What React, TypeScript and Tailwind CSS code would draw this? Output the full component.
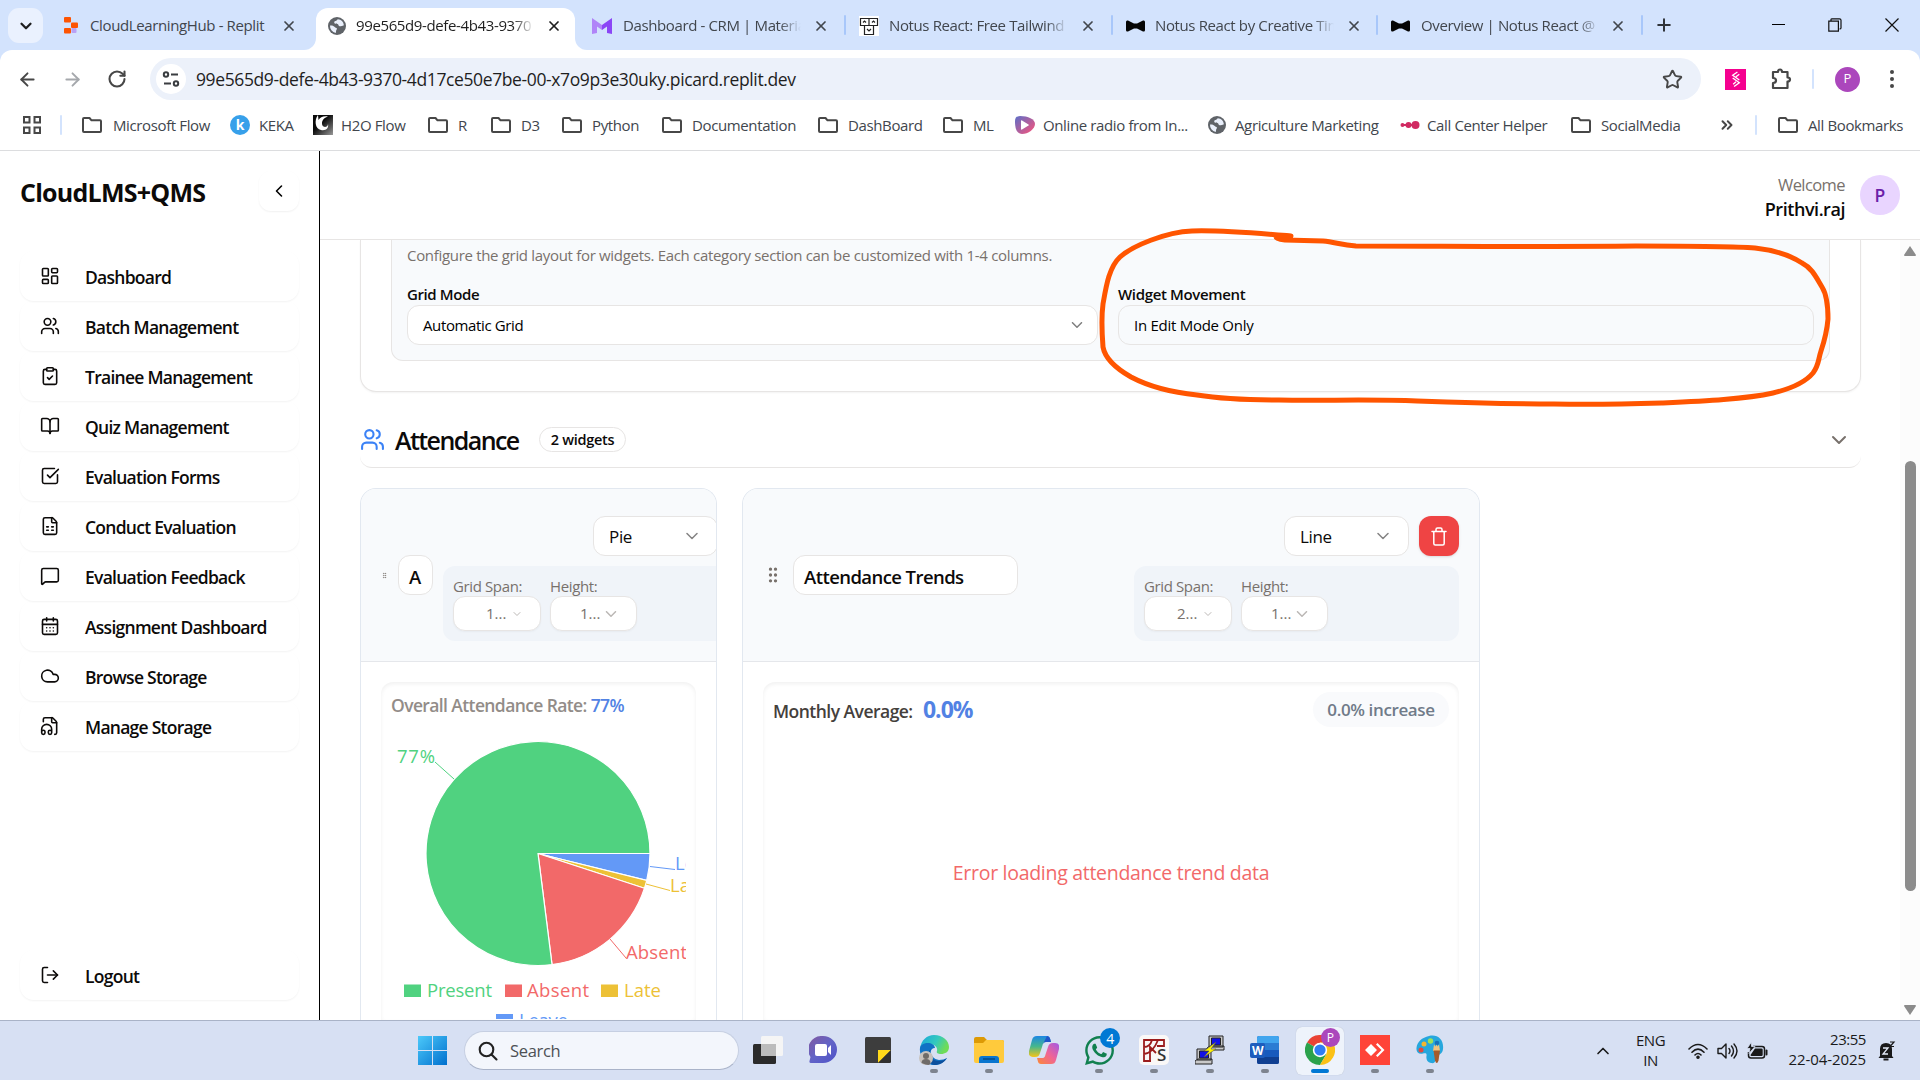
import React from 'react';
import {
  LayoutDashboard, Users, ClipboardCheck, BookOpen, FileSpreadsheet, MessageSquare,
  CalendarDays, Cloud, FileHeadphone, LogOut, ChevronLeft, ChevronDown, ChevronUp, GripVertical,
  X, Plus, ArrowLeft, ArrowRight, RotateCw, Star, SquareCheckBig, ChevronsRight,
} from 'lucide-react';
import { FaWhatsapp } from 'react-icons/fa';

const Globe = ({ className = '' }) => (
  <svg viewBox="0 0 18 18" className={`size-[18px] shrink-0 ${className}`}>
    <circle cx="9" cy="9" r="9" fill="#5f6368" />
    <path d="M9.8 2.2C9 3 8.700 3.800 7.500 4c-1.400.2-1.500 1.500-1 2.300.6.8 2.200.4 3.100.8 1.200.5.6 1.900 1.900 2.100 1.500.2 2.400-.4 4.400-1A7 7 0 0 0 9.800 2.200zM2 8.500c1.900-.4 4 .4 4.700 1.500.6 1 1.800.7 2.200 1.600.3.8-.5 1.300-.8 2.200-.2.700.1 1.500-.4 2.100A7 7 0 0 1 2 8.500z" fill="#e9effb" />
  </svg>
);

const Bow = () => (
  <svg viewBox="0 0 19 12" className="h-3 w-[19px] shrink-0">
    <path d="M0 2Q0 0 2 .6L8 3.500h3L17 .6Q19 0 19 2v8q0 2-2 1.400L11 8.500H8L2 11.400Q0 12 0 10z" fill="#050505" />
  </svg>
);

const Replit = () => (
  <svg viewBox="0 0 14 17" className="h-[17px] w-3.5 shrink-0">
    <rect width="7" height="5.500" rx="1" fill="#fd5402" />
    <rect x="7" y="5.500" width="7" height="5.500" rx="1" fill="#fd5402" />
    <rect y="11" width="7" height="5.500" rx="1" fill="#fd5402" />
    <rect x="7.500" y="11" width="5" height="5" rx="1" fill="#b9a2f5" />
  </svg>
);

const MaterialM = () => (
  <svg viewBox="0 0 20 16" className="h-4 w-5 shrink-0">
    <path d="M0 0l10 7v5L5 8.500V15l-5 1z" fill="#b084f8" />
    <path d="M20 0L10 7v5l5-3.500V15l5 1z" fill="#8b46f6" />
  </svg>
);

const NotusFaces = () => (
  <svg viewBox="0 0 20 20" className="size-5 shrink-0">
    <rect width="20" height="20" fill="#fff" />
    <g fill="none" stroke="#222" strokeWidth="1.200">
      <path d="M1.500 2.500h17v7h-17zM10 2.500v7M5.500 9.500h9v9h-9z" />
      <path d="M4 6.500l1.500-1.500L7 6.500M13 6.500l1.500-1.500 1.500 1.500M8 13l2 2 2-2" />
    </g>
  </svg>
);

type TabProps = { icon: React.ReactNode; label: string; className: string; labelClass: string; fade?: boolean; active?: boolean };
function Tab({ icon, label, className, labelClass, fade = true, active }: TabProps) {
  return (
    <div className={`flex h-[42px] shrink-0 items-center pb-[7px] ${active ? 'rounded-t-[12px] bg-white' : ''} ${className}`}>
      {icon}
      <span className={`whitespace-nowrap text-[15px] tracking-[-0.025em] ${active ? 'text-[#1f1f1f]' : 'text-[#41464d]'} ${fade ? '[mask-image:linear-gradient(to_right,black_88%,transparent_100%)]' : ''} ${labelClass}`}>{label}</span>
      <X className="-ml-[3px] size-4 shrink-0" strokeWidth={2.600} color={active ? '#1f1f1f' : '#41464d'} />
    </div>
  );
}

const TabSep = ({ className = '' }) => <div className={`h-5 w-[2px] shrink-0 rounded bg-[#a8c7fa] ${className}`} />;

function TabStrip() {
  return (
    <div className="flex h-[50px] items-start bg-[#d3e3fd] pt-2">
      <div className="ml-2 flex size-[35px] items-center justify-center rounded-[11px] bg-[#eaf1fe]">
        <ChevronDown className="size-[18px]" strokeWidth={3} color="#1f1f1f" />
      </div>
      <Tab icon={<Replit />} label="CloudLearningHub - Replit" fade={false} className="w-[261px] pl-[21px]" labelClass="ml-3 mr-[15px] w-[179px]" />
      <div className="flex h-[42px] w-3 shrink-0 items-end overflow-hidden bg-white"><div className="h-[42px] w-3 rounded-br-[12px] bg-[#d3e3fd]" /></div>
      <Tab active icon={<Globe />} label="99e565d9-defe-4b43-9370" className="w-[259px] pl-3" labelClass="ml-[10px] mr-[15px] w-[178px]" />
      <div className="h-[42px] w-3 shrink-0 bg-white"><div className="h-[42px] w-3 rounded-bl-[12px] bg-[#d3e3fd]" /></div>
      <Tab icon={<MaterialM />} label="Dashboard - CRM | Materia" className="w-[257px] pl-[5px]" labelClass="ml-[11px] mr-[15px] w-[178px]" />
      <TabSep className="mt-[7px]" />
      <Tab icon={<NotusFaces />} label="Notus React: Free Tailwind" className="w-[265px] pl-[13px]" labelClass="ml-[10px] mr-[15px] w-[179px]" />
      <TabSep className="mt-[7px]" />
      <Tab icon={<Bow />} label="Notus React by Creative Tim" className="w-[263px] pl-[13px]" labelClass="ml-[10px] mr-[15px] w-[179px]" />
      <TabSep className="mt-[7px]" />
      <Tab icon={<Bow />} label="Overview | Notus React @" className="w-[263px] pl-[13px]" labelClass="ml-[11px] mr-[13px] w-[179px]" />
      <TabSep className="mt-[7px]" />
      <Plus className="ml-[11px] mt-[7px] size-5 shrink-0" strokeWidth={2.400} color="#30343a" />
      <div className="ml-auto mr-[21px] flex h-[33px] items-center gap-[43px]">
        <div className="h-px w-[13px] bg-black" />
        <svg viewBox="0 0 14 14" className="size-[14px]"><path d="M.8 3.200h9.600v10H.8zM3 3V1.500Q3 .8 4 .8h7.500Q13 .8 13 2.300V10q0 1-1.500 1" fill="none" stroke="#111" strokeWidth="1.200" /></svg>
        <svg viewBox="0 0 14 14" className="size-[14px]"><path d="M.5.500l13 13M13.500.500l-13 13" stroke="#111" strokeWidth="1.200" /></svg>
      </div>
    </div>
  );
}

function AddressBar() {
  return (
    <div className="bg-[#d3e3fd]">
      <div className="flex h-[58px] items-center rounded-t-[12px] bg-white">
        <ArrowLeft className="ml-[17px] size-[21px]" strokeWidth={2.200} color="#474747" />
        <ArrowRight className="ml-6 size-[21px]" strokeWidth={2.200} color="#a5a8ac" />
        <RotateCw className="ml-6 size-[20px]" strokeWidth={2.500} color="#474747" />
        <div className="ml-[23px] flex h-[42px] w-[1551px] shrink-0 items-center rounded-full bg-[#ecf1fa]">
          <div className="ml-[6px] flex size-[30px] items-center justify-center rounded-full bg-white">
            <svg viewBox="0 0 18 18" className="size-[18px]" fill="none" stroke="#3a3d41" strokeWidth="2"><circle cx="4" cy="4.500" r="2.200" /><path d="M9 4.500h7M2 13.500h7" /><circle cx="14" cy="13.500" r="2.200" /></svg>
          </div>
          <span className="ml-[10px] whitespace-nowrap text-[17.500px] tracking-[-0.022em] text-[#1f1f1f]">99e565d9-defe-4b43-9370-4d17ce50e7be-00-x7o9p3e30uky.picard.replit.dev</span>
          <Star className="ml-auto mr-[18px] size-[21px]" strokeWidth={2.200} color="#474747" />
        </div>
        <div className="ml-[24px] flex h-[21px] w-[21px] items-center justify-center bg-[#f5008f]">
          <svg viewBox="0 0 12 18" className="h-[17px] w-3" fill="none" stroke="#fff" strokeWidth="1.400"><path d="M7.500 1L2.500 4.500l7 5M9.500 3.500L6 6M2.500 7.500l7 5-5.500 4M6 11.500L3 14" /></svg>
        </div>
        <svg viewBox="0 0 22 22" className="ml-6 size-[22px]" fill="none" stroke="#474747" strokeWidth="2.200" strokeLinejoin="round"><path d="M3 4h5q0-2.500 2-2.500T12 4h5.500v5.500q2.500 0 2.500 2t-2.500 2V20H3v-5q3 0 3-2.500T3 10z" /></svg>
        <div className="ml-[20px] h-5 w-[2px] rounded bg-[#d3e3fd]" />
        <div className="ml-[21px] flex size-[25px] items-center justify-center rounded-full bg-[#ab47bc] text-[13px] text-white">P</div>
        <svg viewBox="0 0 4 20" className="ml-[30px] h-5 w-1" fill="#474747"><circle cx="2" cy="3" r="2" /><circle cx="2" cy="10" r="2" /><circle cx="2" cy="17" r="2" /></svg>
      </div>
    </div>
  );
}

const FolderIcon = () => (
  <svg viewBox="0 0 20 16" className="h-4 w-5" fill="none" stroke="#474747" strokeWidth="2" strokeLinejoin="round"><path d="M1 2q0-1 1-1h5.500l2 2.300H18q1 0 1 1V14q0 1-1 1H2q-1 0-1-1z" /></svg>
);
const KekaIcon = () => <div className="flex size-5 items-center justify-center rounded-full bg-[#37a0ea] text-[14px] font-bold leading-none text-white">k</div>;
const H2OIcon = () => (
  <svg viewBox="0 0 20 20" className="size-5">
    <defs><linearGradient id="h2o" x1="0" y1="0" x2="1" y2="1"><stop offset=".4" stopColor="#0a0a0a" /><stop offset="1" stopColor="#999" /></linearGradient></defs>
    <rect width="20" height="20" fill="url(#h2o)" />
    <path d="M5 0C1 5 2 14 8 15c5 1 8-2 7-6 0 3-4 4-5.500 1.500C8 7 10 3 15 1.500 11 .5 7 2 5.500 5z" fill="#fff" />
  </svg>
);
const RadioIcon = () => (
  <svg viewBox="0 0 20 18" className="h-[18px] w-5">
    <defs><linearGradient id="radio" x1="0" y1="0" x2="1" y2="1"><stop stopColor="#5b6fc9" /><stop offset="1" stopColor="#ff5277" /></linearGradient></defs>
    <path d="M5 0C13 0 20 3 20 8S13 18 7 18 0 11 0 5Q0 0 5 0z" fill="url(#radio)" /><path d="M7 4.500Q6 4 6 5v8q0 1 1 .5l6.500-4q.8-.5 0-1z" fill="#fff" />
  </svg>
);
const CallIcon = () => <svg viewBox="0 0 20 8" className="h-2 w-5" fill="#d12a62"><circle cx="2.500" cy="4" r="2" /><circle cx="8.500" cy="4" r="3" /><circle cx="15.500" cy="4" r="4" /><path d="M2 3h13v2H2z" /></svg>;

const bookmarks = [
  { i: <FolderIcon />, t: 'Microsoft Flow', w: 'w-[148px]', g: 'ml-[11px]' },
  { i: <KekaIcon />, t: 'KEKA', w: 'w-[83px]', g: 'ml-[9px]' },
  { i: <H2OIcon />, t: 'H2O Flow', w: 'w-[115px]', g: 'ml-2' },
  { i: <FolderIcon />, t: 'R', w: 'w-[63px]', g: 'ml-[10px]' },
  { i: <FolderIcon />, t: 'D3', w: 'w-[71px]', g: 'ml-[10px]' },
  { i: <FolderIcon />, t: 'Python', w: 'w-[100px]', g: 'ml-[10px]' },
  { i: <FolderIcon />, t: 'Documentation', w: 'w-[156px]', g: 'ml-[10px]' },
  { i: <FolderIcon />, t: 'DashBoard', w: 'w-[125px]', g: 'ml-[10px]' },
  { i: <FolderIcon />, t: 'ML', w: 'w-[72px]', g: 'ml-[10px]' },
  { i: <RadioIcon />, t: 'Online radio from In...', w: 'w-[193px]', g: 'ml-2' },
  { i: <Globe />, t: 'Agriculture Marketing', w: 'w-[192px]', g: 'ml-[9px]' },
  { i: <CallIcon />, t: 'Call Center Helper', w: 'w-[171px]', g: 'ml-[7px]' },
  { i: <FolderIcon />, t: 'SocialMedia', w: 'w-[147px]', g: 'ml-[10px]' },
];

function Bookmarks() {
  return (
    <div className="flex h-[43px] items-center border-b border-[#dcdddf] bg-white pb-[8px] text-[15px] tracking-[-0.025em] text-[#41464d]">
      <svg viewBox="0 0 18 18" className="ml-[23px] size-[18px]" fill="none" stroke="#474747" strokeWidth="2"><path d="M1 1h5.500v5.500H1zM11.500 1H17v5.500h-5.500zM1 11.500h5.500V17H1zM11.500 11.500H17V17h-5.500z" /></svg>
      <div className="ml-[19px] mr-[20px] h-5 w-[2px] rounded bg-[#d3e3fd]" />
      {bookmarks.map((b) => (
        <div key={b.t} className={`flex shrink-0 items-center whitespace-nowrap ${b.w}`}>
          {b.i}
          <span className={b.g}>{b.t}</span>
        </div>
      ))}
      <ChevronsRight className="size-[18px] shrink-0" strokeWidth={2.600} color="#474747" />
      <div className="ml-[19px] mr-[21px] h-5 w-[2px] shrink-0 rounded bg-[#d3e3fd]" />
      <FolderIcon /><span className="ml-[10px] whitespace-nowrap">All Bookmarks</span>
    </div>
  );
}

const menu = [
  { i: LayoutDashboard, t: 'Dashboard' },
  { i: Users, t: 'Batch Management' },
  { i: ClipboardCheck, t: 'Trainee Management' },
  { i: BookOpen, t: 'Quiz Management' },
  { i: SquareCheckBig, t: 'Evaluation Forms' },
  { i: FileSpreadsheet, t: 'Conduct Evaluation' },
  { i: MessageSquare, t: 'Evaluation Feedback' },
  { i: CalendarDays, t: 'Assignment Dashboard' },
  { i: Cloud, t: 'Browse Storage' },
  { i: FileHeadphone, t: 'Manage Storage' },
];

function MenuItem({ icon: Icon, label }: { icon: React.ElementType; label: string }) {
  return (
    <div className="flex h-[50px] items-center rounded-[14px] pl-5 shadow-[0_1px_2px_rgba(0,0,0,0.05)]">
      <Icon className="size-5 shrink-0" strokeWidth={1.900} color="#0c0a09" />
      <span className="ml-[25px] mt-[2px] whitespace-nowrap text-[17.500px] font-semibold tracking-[-0.042em] text-[#0c0a09]">{label}</span>
    </div>
  );
}

function Sidebar() {
  return (
    <aside className="flex w-[320px] shrink-0 flex-col border-r border-black bg-white px-5">
      <div className="mt-5 flex h-10 items-center justify-between">
        <h1 className="mt-[3px] whitespace-nowrap text-[25px] font-bold tracking-[-0.03em] text-[#0c0a09]">CloudLMS+QMS</h1>
        <div className="flex size-10 items-center justify-center rounded-[12px] shadow-[0_1px_2px_rgba(0,0,0,0.06)]"><ChevronLeft className="size-5" strokeWidth={1.900} /></div>
      </div>
      <nav className="mt-[40px]">{menu.map((m) => <MenuItem key={m.t} icon={m.i} label={m.t} />)}</nav>
      <div className="mb-[20px] mt-auto"><MenuItem icon={LogOut} label="Logout" /></div>
    </aside>
  );
}

function ConfigCard() {
  return (
    <section className="h-[152px] shrink-0 rounded-b-[16px] border border-t-0 border-[#e7e5e4] bg-white px-[30px] shadow-[0_1px_2px_rgba(0,0,0,0.05)]">
      <div className="h-[121px] rounded-b-[12px] border border-t-0 border-[#e7e5e4] bg-[#f8fafc] px-[15px]">
        <p className="pt-[3px] text-[15px] leading-6 tracking-[-0.021em] text-[#78716c]">Configure the grid layout for widgets. Each category section can be customized with 1-4 columns.</p>
        <div className="mt-[16px] grid grid-cols-[691px_696px] gap-5 text-[15px]">
          <div>
            <div className="h-[22px] text-[15px] font-semibold leading-[22px] tracking-[-0.026em] text-[#0c0a09]">Grid Mode</div>
            <div className="flex h-10 items-center justify-between rounded-[12px] border border-[#e7e5e4] bg-white px-[15px] tracking-[-0.025em]">Automatic Grid<ChevronDown className="-mr-[4px] size-[18px] opacity-50" /></div>
          </div>
          <div>
            <div className="h-[22px] text-[15px] font-semibold leading-[22px] tracking-[-0.023em] text-[#0c0a09]">Widget Movement</div>
            <div className="flex h-10 items-center rounded-[12px] border border-[#e7e5e4] px-[15px] tracking-[-0.018em]">In Edit Mode Only</div>
          </div>
        </div>
      </div>
    </section>
  );
}

function MiniSelect({ label, value, small }: { label: string; value: string; small?: boolean }) {
  return (
    <div className={small ? 'w-[88px] shrink-0' : 'w-[87px] shrink-0'}>
      <div className="h-5 whitespace-nowrap text-[15px] leading-5 tracking-[-0.025em] text-[#78716c]">{label}</div>
      <div className={`flex h-[35px] items-center rounded-[12px] border border-[#e7e5e4] bg-white text-[15px] text-[#78716c] shadow-[0_1px_2px_rgba(0,0,0,0.04)] ${small ? 'pl-[32px]' : 'pl-[29px]'}`}>
        <span className="w-[20px]">{value}</span>
        <ChevronDown className={small ? 'ml-[5px] size-3 opacity-50' : 'ml-[2px] size-[18px] opacity-50'} />
      </div>
    </div>
  );
}

function Controls({ span, className }: { span: string; className: string }) {
  return (
    <div className={`flex h-[75px] shrink-0 gap-[9px] rounded-[12px] bg-[#f0f4f9] px-[10px] pt-[10px] ${className}`}>
      <MiniSelect label="Grid Span:" value={span} small />
      <MiniSelect label="Height:" value="1..." />
    </div>
  );
}

function KindSelect({ value }: { value: string }) {
  return (
    <div className="flex h-10 w-[125px] shrink-0 items-center justify-between rounded-[12px] border border-[#e7e5e4] bg-white px-[15px] text-[17px] text-[#0c0a09]">
      <span className="mt-[2px] tracking-[-0.02em]">{value}</span><ChevronDown className="size-5 opacity-50" strokeWidth={1.800} />
    </div>
  );
}

const CX = 147;
const CY = 115.5;
const R = 112;
const pt = (deg: number, r = R) => `${(CX + r * Math.cos((deg * Math.PI) / 180)).toFixed(2)} ${(CY + r * Math.sin((deg * Math.PI) / 180)).toFixed(2)}`;
const slices = [
  { from: 0, to: 13.900, color: '#6399f7' },
  { from: 13.900, to: 18.100, color: '#edc136' },
  { from: 18.100, to: 82.800, color: '#f26969' },
  { from: 82.800, to: 360, color: '#50d280' },
];

function PieChart() {
  return (
    <svg viewBox="0 0 295 281" className="h-[281px] w-[295px] text-[18.500px]">
      {slices.map((s) => (
        <path key={s.color} d={`M${CX} ${CY}L${pt(s.from)}A${R} ${R} 0 ${s.to - s.from > 180 ? 1 : 0} 1 ${pt(s.to)}Z`} fill={s.color} stroke="#fff" strokeWidth="1.200" />
      ))}
      <g fill="none">
        <path d="M63 41L44 24" stroke="#50d280" />
        <path d="M259 128.500L284 131.500" stroke="#6399f7" />
        <path d="M255 146L279 152.500" stroke="#edc136" />
        <path d="M219 201L235 220" stroke="#f26969" />
      </g>
      <text x="6" y="24.500" fill="#50d280" textLength="38">77%</text>
      <text x="284" y="131.500" fill="#6399f7">Leave</text>
      <text x="279" y="153.500" fill="#edc136">Late</text>
      <text x="235" y="221" fill="#f26969" textLength="61">Absent</text>
      <rect x="13" y="246.500" width="17" height="12.500" fill="#50d280" /><text x="36" y="258.500" fill="#50d280" textLength="65">Present</text>
      <rect x="114" y="246.500" width="17" height="12.500" fill="#f26969" /><text x="136" y="258.500" fill="#f26969" textLength="62">Absent</text>
      <rect x="210" y="246.500" width="17" height="12.500" fill="#edc136" /><text x="233" y="258.500" fill="#edc136" textLength="37">Late</text>
      <rect x="105" y="276" width="17" height="12.500" fill="#6399f7" /><text x="128" y="289" fill="#6399f7" textLength="49">Leave</text>
    </svg>
  );
}

function TrashIcon() {
  return <svg viewBox="0 0 16 19" className="h-[19px] w-4" fill="none" stroke="#fff" strokeWidth="1.500" strokeLinecap="round" strokeLinejoin="round"><path d="M1 4.500h14M2.800 4.500v12q0 1.500 1.500 1.500h7.400q1.500 0 1.500-1.500v-12M5 4.300V2.500Q5 1 6.500 1h3Q11 1 11 2.500v1.800" /></svg>;
}

function Widgets() {
  return (
    <div className="mt-5 flex min-h-0 flex-1 gap-[25px]">
      <article className="flex w-[357px] shrink-0 flex-col overflow-hidden rounded-t-[16px] border border-b-0 border-[#e2e8f0] bg-white">
        <div className="flex h-[173px] shrink-0 items-center border-b border-[#e5e7eb] bg-[#f8fafc] pl-[20px]">
          <GripVertical className="size-[7px] shrink-0 text-[#78716c]" />
          <div className="ml-[10px] flex h-10 w-[35px] shrink-0 items-center rounded-[12px] border border-[#e7e5e4] bg-white pl-[10px] pt-[3px] text-[18.500px] font-semibold text-[#0c0a09]">A</div>
          <div className="ml-[10px] mt-[7px] flex shrink-0 flex-col gap-[10px]">
            <div className="ml-[150px]"><KindSelect value="Pie" /></div>
            <Controls span="1..." className="w-[325px]" />
          </div>
        </div>
        <div className="mx-5 mt-5 flex-1 rounded-t-[12px] px-[10px] pt-[10px] shadow-[inset_0_2px_4px_rgba(0,0,0,0.06)]">
          <div className="h-[46px] whitespace-nowrap text-[17.500px] font-semibold leading-[26px] tracking-[-0.035em] text-[#928c88]">Overall Attendance Rate: <span className="text-[#5282e4]">77%</span></div>
          <PieChart />
        </div>
      </article>
      <article className="flex w-[738px] shrink-0 flex-col overflow-hidden rounded-t-[16px] border border-b-0 border-[#e2e8f0] bg-white">
        <div className="flex h-[173px] shrink-0 items-center border-b border-[#e5e7eb] bg-[#f8fafc] pl-[20px] pr-5">
          <GripVertical className="size-5 shrink-0 text-[#78716c]" />
          <div className="ml-[10px] flex h-10 w-[225px] shrink-0 items-center rounded-[12px] border border-[#e7e5e4] bg-white pl-[10px] pt-[3px] text-[18.500px] font-semibold tracking-[-0.031em] text-[#0c0a09]">Attendance Trends</div>
          <div className="ml-auto mt-[7px] flex flex-col gap-[10px]">
            <div className="ml-[150px] flex gap-[10px]">
              <KindSelect value="Line" />
              <div className="flex size-10 items-center justify-center rounded-[12px] bg-[#ef4444] shadow-sm"><TrashIcon /></div>
            </div>
            <Controls span="2..." className="w-[325px]" />
          </div>
        </div>
        <div className="mx-5 mt-5 flex flex-1 flex-col rounded-t-[12px] px-[10px] pt-[10px] shadow-[inset_0_2px_4px_rgba(0,0,0,0.06)]">
          <div className="flex h-[35px] items-center whitespace-nowrap">
            <span className="mt-[3px] w-[150px] text-[17.500px] font-semibold tracking-[-0.03em] text-[#44403c]">Monthly Average:</span>
            <span className="text-[23px] font-bold tracking-[-0.045em] text-[#5282e4]">0.0%</span>
            <span className="ml-auto flex h-[35px] w-[136px] items-center justify-center rounded-full bg-[#f9fafc] pt-px text-[17px] font-semibold tracking-[-0.022em] text-[#707b89]">0.0% increase</span>
          </div>
          <p className="mt-[131px] text-center text-[19.500px] tracking-[-0.015em] text-[#f26969]">Error loading attendance trend data</p>
        </div>
      </article>
    </div>
  );
}

function Main() {
  return (
    <main className="flex min-w-0 flex-1 flex-col">
      <header className="flex h-[89px] shrink-0 items-center justify-end border-b border-[#e7e5e4] bg-white pr-5">
        <div className="mr-[15px] mt-[3px] text-right">
          <div className="text-[16.500px] leading-6 tracking-[-0.035em] text-[#78716c]">Welcome</div>
          <div className="text-[18px] font-semibold leading-6 tracking-[-0.025em] text-[#0c0a09]">Prithvi.raj</div>
        </div>
        <div className="flex size-10 items-center justify-center rounded-full bg-[#e9d5ff] text-[17.500px] font-semibold text-[#6b21a8]">P</div>
      </header>
      <div className="flex min-h-0 flex-1">
        <div className="flex min-w-0 flex-1 flex-col overflow-hidden pl-10 pr-[39px]">
          <ConfigCard />
          <div className="mt-5 flex h-[56px] shrink-0 items-center rounded-b-[12px] border-b border-[#e7e5e4]">
            <Users className="size-[25px]" color="#3b82f6" />
            <h2 className="ml-[10px] mt-[2px] w-[144px] whitespace-nowrap text-[25px] font-semibold tracking-[-0.063em] text-[#0c0a09]">Attendance</h2>
            <span className="flex h-[25px] w-[87px] items-center justify-center rounded-full border border-[#e7e5e4] text-[14.500px] font-semibold tracking-[-0.022em] text-[#0c0a09]">2 widgets</span>
            <ChevronDown className="ml-auto mr-[10px] size-6" color="#78716c" />
          </div>
          <Widgets />
        </div>
        <div className="flex w-5 flex-col items-center bg-[#fcfcfc] pb-[5px] pt-[6px]">
          <svg viewBox="0 0 12 10" className="h-[10px] w-3"><path d="M6 0l6 9q0 1-1 1H1q-1 0-1-1z" fill="#8b8b8b" /></svg>
          <div className="mt-[205px] h-[430px] w-[11px] rounded-full bg-[#8b8b8b]" />
          <svg viewBox="0 0 12 10" className="mt-auto h-[10px] w-3"><path d="M6 10l6-9q0-1-1-1H1q-1 0-1 1z" fill="#8b8b8b" /></svg>
        </div>
      </div>
    </main>
  );
}

const WindowsIcon = () => (
  <svg viewBox="0 0 29 29" className="size-[29px]">
    <defs><linearGradient id="win" x1="0" y1="0" x2="29" y2="29" gradientUnits="userSpaceOnUse"><stop stopColor="#4cc9fa" /><stop offset="1" stopColor="#0070ce" /></linearGradient></defs>
    <path d="M0 0h14v14H0zM15 0h14v14H15zM0 15h14v14H0zM15 15h14v14H15z" fill="url(#win)" />
  </svg>
);
const TaskView = () => <svg viewBox="0 0 30 28" className="h-7 w-[30px]"><rect y="8" width="23" height="20" rx="1.500" fill="#2b2b2b" /><rect x="8" width="22" height="20" rx="1.500" fill="#f5f5f5" /><path d="M8 8h15v12H8z" fill="#bcbcbc" /></svg>;
const Meet = () => (
  <svg viewBox="0 0 28 28" className="size-7">
    <defs><linearGradient id="meet" x1="0" y1="0" x2="1" y2="1"><stop stopColor="#83599f" /><stop offset=".5" stopColor="#6264c7" /><stop offset="1" stopColor="#4f52c8" /></linearGradient></defs>
    <path d="M14 0a14 13.500 0 1 1 0 27H2q-2 0-1.500-2l1-4A14 13.500 0 0 1 14 0z" fill="url(#meet)" /><rect x="6" y="8" width="12" height="12" rx="2" fill="#fff" /><path d="M19 12l3-3v10l-3-3z" fill="#fff" />
  </svg>
);
const Notes = () => <svg viewBox="0 0 26 26" className="size-[26px]"><rect width="26" height="26" rx="1.500" fill="#3d3d3d" /><path d="M13 13h13L13 26z" fill="#ffd91a" /><path d="M13 26L26 13v11q0 2-2 2z" fill="#303030" /></svg>;
const Edge = () => (
  <svg viewBox="0 0 30 30" className="size-[30px]">
    <defs><linearGradient id="edge" x1="0" y1="0" x2="1" y2=".4"><stop stopColor="#19a6dc" /><stop offset=".6" stopColor="#33c9be" /><stop offset="1" stopColor="#6fdc57" /></linearGradient></defs>
    <path d="M1 14C2 5 8 0 15 0c9 0 15 6 15 12 0 5-4 7-8 7-3 0-5-1-4-3 1-3-2-7-7-7-6 0-10 4-10 5z" fill="url(#edge)" />
    <path d="M1 13c1-6 14-7 15 0-7 0-5 11 4 12 3 0 6-1 8-2-3 5-9 8-15 7C5 28 0 20 1 13z" fill="#1072c5" />
    <path d="M12 14c-4 6 1 12 8 12 3 0 6-1 8-3-3 5-8 7-13 7-6-2-9-11-3-16z" fill="#0c4f9c" />
    <circle cx="7" cy="23" r="7" fill="#c8c2bd" /><circle cx="7" cy="21" r="3" fill="#6f6b68" /><path d="M2.500 28q0-4 4.500-4t4.500 4-9 0z" fill="#6f6b68" />
  </svg>
);
const Explorer = () => <svg viewBox="0 0 30 27" className="h-[27px] w-[30px]"><path d="M0 2q0-2 2-2h8l3 3H28q2 0 2 2v8H0z" fill="#dd9a05" /><path d="M0 6h9l3-3h16q2 0 2 2v19q0 2-2 2H2q-2 0-2-2z" fill="#ffca3c" /><path d="M5 26v-4q0-3 3-3h14q3 0 3 3v4z" fill="#0a76cf" /><path d="M9 22h12" stroke="#064a86" strokeWidth="1.500" /></svg>;
const Copilot = () => (
  <svg viewBox="0 0 30 28" className="h-7 w-[30px]">
    <defs><linearGradient id="cpa" x1="0" y1="0" x2="0" y2="1"><stop stopColor="#1d87e4" /><stop offset=".5" stopColor="#46b78c" /><stop offset="1" stopColor="#f5c518" /></linearGradient><linearGradient id="cpb" x1="1" y1="0" x2="0" y2="1"><stop stopColor="#a259e6" /><stop offset=".5" stopColor="#f06595" /><stop offset="1" stopColor="#fb8a35" /></linearGradient></defs>
    <path d="M8 0h10c3 0 3 3 4 6h-5c-3 0-3 2-4 5l-2 6c-1 3-2 4-5 4H4c-3 0-5-2-4-6L3 4c1-3 2-4 5-4z" fill="url(#cpa)" />
    <path d="M22 28H12c-3 0-3-3-4-6h5c3 0 3-2 4-5l2-6c1-3 2-4 5-4h2c3 0 5 2 4 6l-3 11c-1 3-2 4-5 4z" fill="url(#cpb)" />
    <path d="M18 0q3 0 4 6h-5q-2 0-3 2z" fill="#1f57c9" />
  </svg>
);
const WhatsApp = () => (
  <div className="relative flex size-[30px] items-center justify-center"><FaWhatsapp className="size-[33px] shrink-0" color="#11804f" />
    <div className="absolute -right-[6px] -top-[7px] flex size-5 items-center justify-center rounded-full bg-[#0078d4] text-[14px] text-white">4</div></div>
);
const Kss = () => <div className="relative flex size-[30px] items-center justify-center rounded-[5px] bg-[#faf8f7]"><svg viewBox="0 0 24 24" className="size-6" fill="none" stroke="#9b1c1c" strokeWidth="1.800"><path d="M9 23H2V2h20v7M2 9q6 0 8-7M2 16q9-1 14-14M8 22V9l6 6M15 8h7" /></svg><span className="absolute bottom-0 right-[3px] text-[17px] font-semibold leading-5 text-[#333]">S</span></div>;
const Putty = () => (
  <svg viewBox="0 0 30 30" className="size-[30px]">
    <g stroke="#222" strokeWidth="1"><path d="M14 1h14v11H14zM12 13l3-2h14v4H12z" fill="#c9c9c9" /><path d="M16.500 3h9v7h-9z" fill="#1010e8" /><path d="M2 14h14v11H2zM0 26l3-2h14v5H0z" fill="#c9c9c9" /><path d="M4.500 16h9v7h-9z" fill="#1010e8" /></g>
    <path d="M21 7l-12 9h5l-5 6 12-8h-5z" fill="#fff200" stroke="#555" strokeWidth=".6" />
  </svg>
);
const Word = () => <div className="relative h-7 w-[29px]"><svg viewBox="0 0 29 28" className="size-full"><rect x="7" width="22" height="28" rx="2" fill="#185abd" /><path d="M7 7V2q0-2 2-2h18q2 0 2 2v5z" fill="#41a5ee" /><path d="M7 7h22v7H7z" fill="#2b7cd3" /><path d="M7 21h22v5q0 2-2 2H9q-2 0-2-2z" fill="#103f91" /></svg><span className="absolute left-0 top-[7px] flex size-[15px] items-center justify-center rounded-[2px] bg-[#1d5cbd] text-[12px] font-bold text-white">W</span></div>;
const Chrome = () => (
  <div className="relative size-[30px]">
    <svg viewBox="0 0 30 30" className="size-[30px]"><path d="M15 15L2 7.500A15 15 0 0 1 28 7.500H15z" fill="#ea4335" /><path d="M15 15L2 7.500A15 15 0 0 0 15 30l6.500-11z" fill="#2ba24c" /><path d="M15 30A15 15 0 0 0 28 7.500H15L21.500 19z" fill="#fbc116" /><circle cx="15" cy="15" r="7.200" fill="#fff" /><circle cx="15" cy="15" r="5.600" fill="#2f7df4" /></svg>
    <div className="absolute -right-[5px] -top-[7px] flex size-[19px] items-center justify-center rounded-full bg-[#ab47bc] text-[12px] text-white">P</div>
  </div>
);
const AnyDesk = () => <svg viewBox="0 0 30 30" className="size-[30px]"><rect width="30" height="30" fill="#ff4438" /><path d="M11 9l6 6-6 6-6-6zM16 9.500l1.500-1.500 7 7-7 7L16 20.500l5.500-5.500z" fill="#fff" /></svg>;
const Paint = () => (
  <svg viewBox="0 0 30 30" className="size-[30px]"><path d="M14 1C23-1 29 5 28 14c-.5 5-4 5-6 8s-1 7-6 6c-4-1-5-4-4.500-7 .5-3-1-3-3.500-2.500-4 1-7-1-6.500-5.500C2 7 7 2.500 14 1z" fill="#26a7dd" /><circle cx="15.500" cy="6" r="2.700" fill="#9be15a" /><circle cx="9" cy="9" r="2.500" fill="#f2b632" /><circle cx="6" cy="15" r="2.500" fill="#e44a3c" /><circle cx="22" cy="8" r="2.300" fill="#1571b8" /><path d="M19 9.500l1.500 2 1-2 1 2 1.500-2 1 6.500h-7z" fill="#f0c27c" /><path d="M18.500 15.500h6.500l-1.500 10q-1.700 5-3.500 0z" fill="#a65b2b" /></svg>
);

const apps = [
  { i: <TaskView />, s: 0 }, { i: <Meet />, s: 0 }, { i: <Notes />, s: 0 }, { i: <Edge />, s: 1 }, { i: <Explorer />, s: 1 },
  { i: <Copilot />, s: 0 }, { i: <WhatsApp />, s: 1 }, { i: <Kss />, s: 1 }, { i: <Putty />, s: 1 }, { i: <Word />, s: 1 },
  { i: <Chrome />, s: 2 }, { i: <AnyDesk />, s: 1 }, { i: <Paint />, s: 1 },
];

function Taskbar() {
  return (
    <footer className="flex h-[60px] shrink-0 items-center border-t border-[#a9b3c7] bg-[#d7e0f3]">
      <div className="ml-[418px]"><WindowsIcon /></div>
      <div className="ml-[17px] flex h-[39px] w-[275px] shrink-0 items-center rounded-full border border-[#c6cfe2] border-b-[#a9b3c9] bg-[#f3f6fc] pl-[13px]">
        <svg viewBox="0 0 20 20" className="size-5" fill="none" stroke="#222" strokeWidth="2.100" strokeLinecap="round"><circle cx="8.500" cy="8.500" r="6.800" /><path d="M13.500 13.500L18.500 18.500" /></svg>
        <span className="ml-3 mt-px text-[16.500px] tracking-[-0.02em] text-[#4d5055]">Search</span>
      </div>
      <div className="ml-[1.500px] flex">
        {apps.map((a, n) => (
          <div key={n} className="flex w-[55.200px] justify-center">
            <div className={`flex h-12 w-12 flex-col items-center rounded-[6px] ${a.s === 2 ? 'bg-[#eef3fb] shadow-[0_0_1px_rgba(0,0,0,0.2)]' : ''}`}>
              <div className="flex h-[47px] items-center justify-center">{a.i}</div>
              <div className={`-mt-[5px] h-1 shrink-0 rounded-full ${a.s === 0 ? 'w-0' : a.s === 1 ? 'w-2 bg-[#7e848f]' : 'w-[18px] bg-[#0078d4]'}`} />
            </div>
          </div>
        ))}
      </div>
      <div className="ml-auto flex items-center text-[#1a1a1a]">
        <ChevronUp className="size-5" strokeWidth={2} />
        <div className="-mt-[2px] ml-[19px] w-[37px] whitespace-nowrap text-center text-[15px] leading-5 tracking-[-0.03em]">ENG<br />IN</div>
        <svg viewBox="0 0 20 16" className="ml-[19px] h-4 w-5" fill="none" stroke="#1a1a1a" strokeWidth="1.600" strokeLinecap="round"><path d="M1 6q9-9 18 0M4 9.200q6-6 12 0M7 12q3-3 6 0" /><circle cx="10" cy="14.200" r="1" fill="#1a1a1a" /></svg>
        <svg viewBox="0 0 21 18" className="ml-[9px] h-[18px] w-[21px]" fill="none" stroke="#1a1a1a" strokeWidth="1.400" strokeLinecap="round" strokeLinejoin="round"><path d="M1 6.500h3.500L9 2v14l-4.500-4.500H1zM12 6.500q2 2.500 0 5M14.500 4q4 5 0 10M17 2q6 7 0 14" /></svg>
        <svg viewBox="0 0 21 18" className="ml-[9px] h-[18px] w-[21px]"><path d="M6 4.500h9q2.500 0 2.500 2.500v6.500q0 2.500-2.500 2.500H4q-2.500 0-2.500-2.500V10" fill="none" stroke="#1a1a1a" strokeWidth="1.500" /><path d="M8 6.500h6.500q1.200 0 1.200 1.200v5q0 1.300-1.200 1.300h-10q-1 0-1-1z" fill="#1a1a1a" /><path d="M19.500 8.500v4" stroke="#1a1a1a" strokeWidth="2" strokeLinecap="round" /><path d="M4.500 0L0 6.500h3L2 11.500l6-7H4.500z" fill="#1a1a1a" stroke="#d7e0f3" strokeWidth=".8" /></svg>
        <div className="-mt-[3px] ml-5 w-[78px] text-right text-[15px] leading-5 tracking-[-0.005em]"><div className="tracking-[-0.03em]">23:55</div><div className="whitespace-nowrap">22-04-2025</div></div>
        <div className="ml-[11px] mr-[24px]"><svg viewBox="0 0 19 20" className="h-5 w-[19px]"><path d="M3 15V8q0-6 6-6 6 0 6 6v7l1.500 2H1.500z" fill="#1a1a1a" /><path d="M6.500 18.500h5" stroke="#1a1a1a" strokeWidth="2" /><path d="M6 7h5l-5 6h5" fill="none" stroke="#e5ebf8" strokeWidth="1.300" /><path d="M13 1h4l-4 4.500h4" fill="none" stroke="#1a1a1a" strokeWidth="1.200" /></svg></div>
      </div>
    </footer>
  );
}

export default function App() {
  return (
    <div className="relative flex h-[1080px] w-[1920px] flex-col overflow-hidden bg-white font-['Open_Sans','Noto_Sans',sans-serif]">
      <TabStrip />
      <AddressBar />
      <Bookmarks />
      <div className="flex min-h-0 flex-1"><Sidebar /><Main /></div>
      <Taskbar />
      <svg viewBox="0 0 750 190" className="pointer-events-none absolute left-[1090px] top-[220px] h-[190px] w-[750px]" fill="none" stroke="#ff5500" strokeWidth="5" strokeLinecap="round" strokeLinejoin="round">
        <path d="M201 16C166 13 133 10 102 11C76 12 42 26 30 37C19 47 16 67 13 84C11 99 12 114 13 127C15 138 27 149 41 157C58 166 78 172 107 175C132 179 159 180 189 180C229 181 280 179 327 181C380 183 420 184 464 184C508 185 540 184 573 183C615 181 656 179 683 173C708 167 718 159 723 153C729 145 728 140 731 131C735 119 737 111 738 99C738 88 737 75 732 67C726 57 722 48 712 43C700 35 682 30 665 28C640 26 600 26 546 26C450 27 350 26 266 26C251 25 245 22 233 21L195 20Q186 19 186 17" />
      </svg>
    </div>
  );
}
